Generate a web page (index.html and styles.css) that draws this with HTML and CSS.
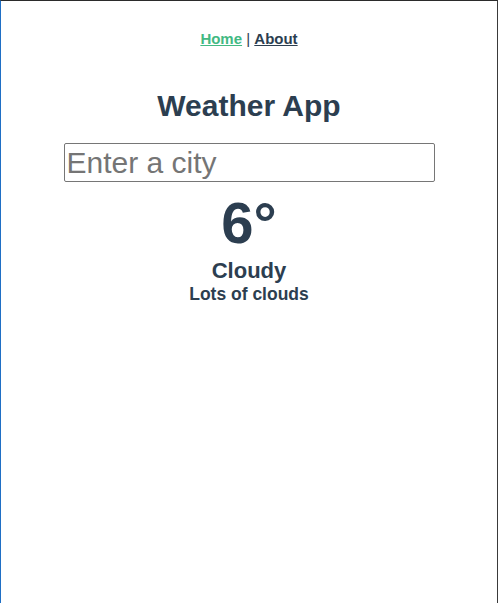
FILE: index.html
```html
<!DOCTYPE html>
<html lang="en">
<head>
<meta charset="utf-8">
<title>Weather App</title>
<link rel="stylesheet" href="styles.css">
</head>
<body>
<div class="app">
  <nav class="nav">
    <a href="#" class="nav-link active">Home</a> | <a href="#" class="nav-link">About</a>
  </nav>
  <main class="home">
    <h1 class="title">Weather App</h1>
    <input class="city-input" type="text" placeholder="Enter a city">
    <div class="temp">6°</div>
    <div class="cond">Cloudy</div>
    <div class="desc">Lots of clouds</div>
  </main>
</div>
</body>
</html>
```
FILE: styles.css
```css
html {
  height: 100%;
  box-sizing: border-box;
  border-top: 1px solid #2b2b2b;
  border-left: 1px solid #1f6fc5;
  border-right: 1px solid #3a3a3a;
  margin-right: 1px;
  background: #fff;
}
body {
  margin: 0;
  font-family: "Liberation Sans", Arial, Helvetica, sans-serif;
  color: #2c3e50;
  -webkit-font-smoothing: antialiased;
}
.app {
  text-align: center;
}
.nav {
  padding: 29px 30px 0;
  font-size: 15px;
  line-height: 17px;
  color: #2c3e50;
}
.nav-link {
  font-weight: bold;
  color: #2c3e50;
}
.nav-link.active {
  color: #42b983;
}
.home {
  display: flex;
  flex-direction: column;
  align-items: center;
}
.title {
  font-size: 30px;
  font-weight: bold;
  margin: 42px 0 0;
  line-height: 34px;
}
.city-input {
  margin-top: 20px;
  width: 371px;
  height: 39px;
  box-sizing: border-box;
  font-family: "Liberation Sans", Arial, sans-serif;
  font-size: 30px;
  padding: 1px 2px;
  border: 1px solid #767676;
  border-radius: 2px;
  color: #222;
}
.city-input::placeholder {
  color: #757575;
}
.temp {
  font-size: 58px;
  font-weight: bold;
  line-height: 66px;
  margin-top: 8px;
}
.cond {
  font-size: 22px;
  font-weight: bold;
  line-height: 25px;
  margin-top: 2px;
}
.desc {
  font-size: 17.5px;
  font-weight: bold;
  line-height: 20px;
  margin-top: 1px;
}
```
